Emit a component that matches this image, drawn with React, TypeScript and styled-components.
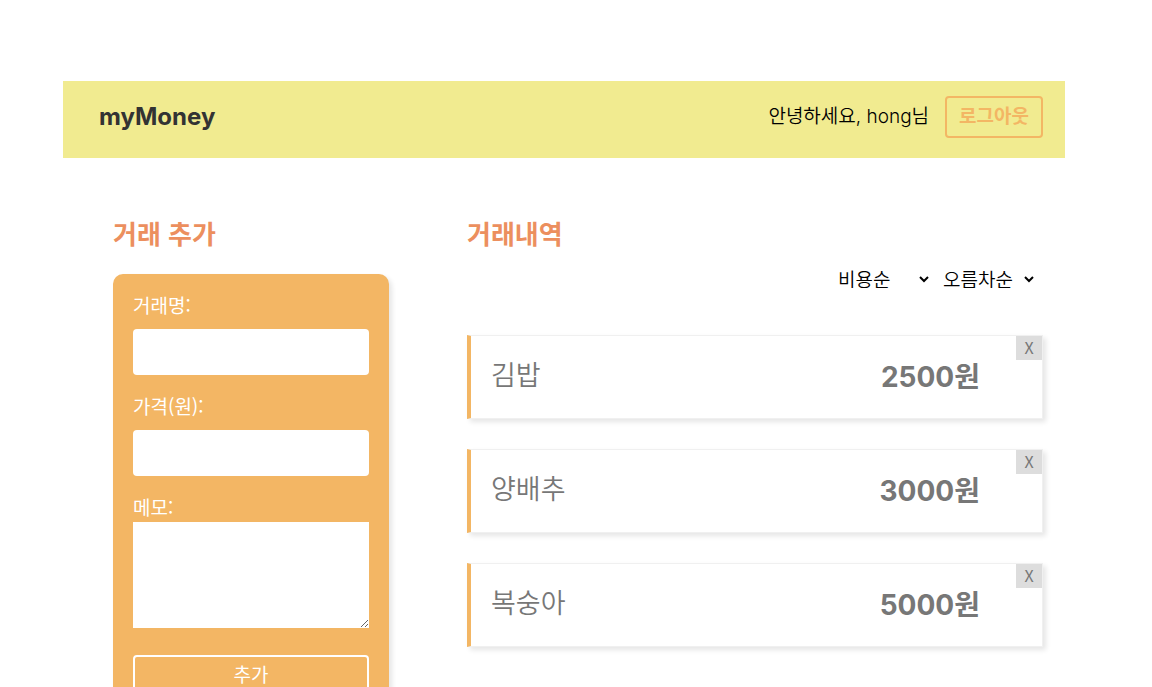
import React, { useState } from "react";
import styled, { createGlobalStyle } from "styled-components";

const colors = {
  header: "#f1eb90",
  orange: "#f3b664",
  heading: "#ec8f5e",
  title: "#333",
  text: "#777",
};

const latin = `Inter, "Noto Sans CJK KR", sans-serif`;
const korean = `"Noto Sans CJK KR", sans-serif`;

const GlobalStyle = createGlobalStyle`
  *, *::before, *::after { box-sizing: border-box; }
  body {
    margin: 0;
    background: #fff;
    font-family: ${latin};
    font-size: 18px;
    color: #000;
  }
`;

const Page = styled.div`
  padding: 81px 87px 40px 63px;
`;

const Header = styled.header`
  display: flex;
  align-items: center;
  justify-content: space-between;
  padding: 15px 22px 20px 36px;
  background: ${colors.header};
`;

const Brand = styled.h1`
  margin: 0;
  font-size: 24px;
  line-height: 32px;
  font-weight: 700;
  color: ${colors.title};
`;

const Account = styled.div`
  display: flex;
  align-items: center;
  gap: 16px;
`;

const Greeting = styled.span`
  font-size: 19px;
  line-height: 28px;
  font-weight: 350;
`;

const OutlineButton = styled.button<{ $color: string; $weight: number; $wide?: boolean }>`
  width: ${(p) => (p.$wide ? "100%" : "auto")};
  height: 42px;
  padding: 0 12px 4px;
  border: 2px solid ${(p) => p.$color};
  border-radius: 4px;
  background: transparent;
  color: ${(p) => p.$color};
  font-family: ${korean};
  font-size: 19px;
  line-height: 28px;
  font-weight: ${(p) => p.$weight};
  cursor: pointer;
`;

const Content = styled.main`
  display: grid;
  grid-template-columns: 276px minmax(0, 1fr);
  gap: 78px;
  align-items: start;
  padding: 58px 22px 0 50px;
`;

const Heading = styled.h2`
  margin: 0;
  font-family: ${korean};
  font-size: 26px;
  line-height: 34px;
  font-weight: 700;
  color: ${colors.heading};
`;

const Form = styled.form`
  display: flex;
  flex-direction: column;
  margin-top: 24px;
  padding: 20px;
  border-radius: 10px;
  background: ${colors.orange};
  box-shadow: 3px 3px 5px rgba(0, 0, 0, 0.1);
`;

const Label = styled.label`
  font-family: ${korean};
  font-size: 19px;
  line-height: 22px;
  color: #fff;
`;

const Input = styled.input`
  width: 100%;
  height: 46px;
  margin: 13px 0 20px;
  padding: 8px;
  border: 0;
  border-radius: 4px;
  background: #fff;
  font: inherit;
`;

const Memo = styled.textarea`
  width: 100%;
  height: 106px;
  margin: 4px 0 27px;
  padding: 8px;
  border: 0;
  background: #fff;
  font: inherit;
  resize: both;
`;

const Sorting = styled.div`
  display: flex;
  justify-content: flex-end;
  gap: 7px;
  padding: 14px 6px 0 0;
`;

const Select = styled.select`
  min-width: 98px;
  height: 30px;
  padding: 0 0 6px;
  border: 0;
  background: transparent;
  color: #000;
  font-family: ${korean};
  font-size: 19px;
  font-weight: 350;
`;

const List = styled.ul`
  display: flex;
  flex-direction: column;
  gap: 30px;
  margin: 41px 0 0;
  padding: 0;
  list-style: none;
`;

const Item = styled.li`
  position: relative;
  display: flex;
  align-items: center;
  justify-content: space-between;
  height: 84px;
  padding: 0 62px 4px 20px;
  border: 1px solid #f0f0f0;
  border-left: 4px solid ${colors.orange};
  background: #fff;
  box-shadow: 3px 3px 5px rgba(0, 0, 0, 0.1);
  color: ${colors.text};
`;

const ItemName = styled.span`
  padding-bottom: 2px;
  font-family: ${korean};
  font-size: 27px;
  line-height: 36px;
  font-weight: 350;
`;

const ItemPrice = styled.strong`
  padding-top: 4px;
  font-size: 28px;
  line-height: 36px;
  font-weight: 700;
`;

const DeleteButton = styled.button`
  position: absolute;
  top: 0;
  right: 0;
  width: 26px;
  height: 24px;
  padding: 0 0 2px;
  border: 0;
  background: #ddd;
  color: ${colors.text};
  font-family: ${korean};
  font-size: 16px;
  line-height: 22px;
  cursor: pointer;
`;

type Transaction = { id: number; title: string; amount: number };

const initial: Transaction[] = [
  { id: 1, title: "김밥", amount: 2500 },
  { id: 2, title: "양배추", amount: 3000 },
  { id: 3, title: "복숭아", amount: 5000 },
];

export default function App() {
  const [items, setItems] = useState(initial);
  const [title, setTitle] = useState("");
  const [price, setPrice] = useState("");

  const add = (e: React.FormEvent) => {
    e.preventDefault();
    if (!title || !price) return;
    setItems([...items, { id: Date.now(), title, amount: Number(price) }]);
    setTitle("");
    setPrice("");
  };

  return (
    <>
      <GlobalStyle />
      <Page>
        <Header>
          <Brand>myMoney</Brand>
          <Account>
            <Greeting lang="ko">안녕하세요, hong님</Greeting>
            <OutlineButton type="button" $color={colors.orange} $weight={700}>
              로그아웃
            </OutlineButton>
          </Account>
        </Header>
        <Content lang="ko">
          <section>
            <Heading>거래 추가</Heading>
            <Form onSubmit={add}>
              <Label htmlFor="title">거래명:</Label>
              <Input id="title" value={title} onChange={(e) => setTitle(e.target.value)} />
              <Label htmlFor="price">가격(원):</Label>
              <Input id="price" inputMode="numeric" value={price} onChange={(e) => setPrice(e.target.value)} />
              <Label htmlFor="memo">메모:</Label>
              <Memo id="memo" />
              <OutlineButton type="submit" $color="#fff" $weight={400} $wide>
                추가
              </OutlineButton>
            </Form>
          </section>
          <section>
            <Heading>거래내역</Heading>
            <Sorting>
              <Select aria-label="정렬 기준">
                <option>비용순</option>
              </Select>
              <Select aria-label="정렬 방향">
                <option>오름차순</option>
              </Select>
            </Sorting>
            <List>
              {items.map((item) => (
                <Item key={item.id}>
                  <ItemName>{item.title}</ItemName>
                  <ItemPrice>{item.amount}원</ItemPrice>
                  <DeleteButton
                    type="button"
                    aria-label={`${item.title} X`}
                    onClick={() => setItems(items.filter((i) => i.id !== item.id))}
                  >
                    X
                  </DeleteButton>
                </Item>
              ))}
            </List>
          </section>
        </Content>
      </Page>
    </>
  );
}
